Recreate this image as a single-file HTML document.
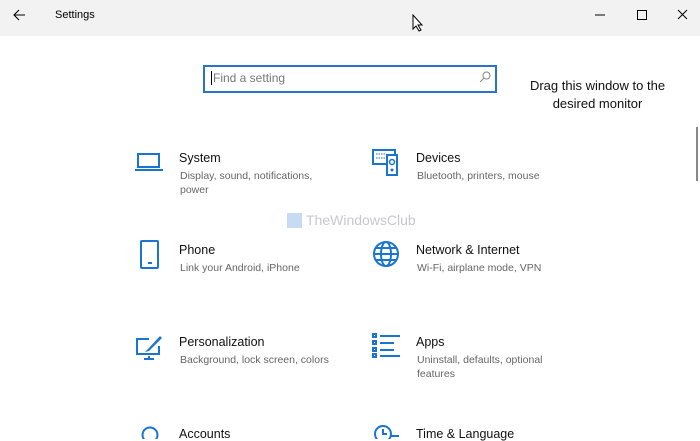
<!DOCTYPE html><html><head><style>
body{margin:0;width:700px;height:439px;overflow:hidden;background:#fff;font-family:"Liberation Sans",sans-serif;position:relative}
.tb{position:absolute;left:0;top:0;width:700px;height:36px;background:#f2f2f2}
.t{position:absolute;font-size:11px;color:#000}
.h{position:absolute;font-size:12.5px;color:#111}
.d{position:absolute;font-size:10.5px;color:#666;line-height:14px}
svg{position:absolute}
</style></head><body>
<div class="tb"></div>
<svg style="left:12px;top:8px" width="14" height="14" viewBox="0 0 14 14"><path d="M13 7H2M7 2L2 7l5 5" stroke="#000" fill="none" stroke-width="1.1"/></svg>
<div class="t" style="left:55px;top:9px">Settings</div>
<svg style="left:412px;top:14px" width="12" height="18" viewBox="0 0 12 18"><path d="M1 1v14l3-3 3 5 2-1-3-5h4z" fill="#fff" stroke="#000" stroke-width="1"/></svg>
<svg style="left:592px;top:8px" width="100" height="14"><path d="M3 7h10" stroke="#000"/><rect x="45.5" y="2.5" width="9" height="9" fill="none" stroke="#000"/><path d="M86 2l9 9M95 2l-9 9" stroke="#000"/></svg>
<div style="position:absolute;left:203px;top:65px;width:290px;height:24px;border:2px solid #2a73c7;background:#fff"></div>
<div style="position:absolute;left:211px;top:71px;width:1px;height:14px;background:#000"></div>
<div class="t" style="left:213px;top:71px;color:#777;font-size:12px">Find a setting</div>
<svg style="left:479px;top:71px" width="12" height="12"><circle cx="7.5" cy="4.5" r="3.5" fill="none" stroke="#888"/><path d="M5 7L1 11" stroke="#888"/></svg>
<div style="position:absolute;left:515px;top:77px;width:165px;text-align:center;font-size:13px;line-height:18px;color:#111">Drag this window to the desired monitor</div>
<div style="position:absolute;left:696px;top:127px;width:2px;height:54px;background:#888"></div>
<svg style="left:135px;top:153px" width="28" height="20"><rect x="3" y="1" width="21" height="13" fill="none" stroke="#1a74d1" stroke-width="2"/><path d="M0 17h28" stroke="#1a74d1" stroke-width="2"/></svg>
<div class="h" style="left:179px;top:151px">System</div>
<div class="d" style="left:180px;top:169px">Display, sound, notifications,<br>power</div>
<svg style="left:372px;top:149px" width="28" height="28"><rect x="1" y="1" width="22" height="14" fill="none" stroke="#1a74d1" stroke-width="2"/><rect x="15" y="6" width="10" height="20" fill="#fff" stroke="#1a74d1" stroke-width="2"/><circle cx="20" cy="13" r="2.5" fill="none" stroke="#1a74d1" stroke-width="1.5"/><circle cx="20" cy="21" r="1.5" fill="#1a74d1"/><path d="M4 5h9M4 9h9" stroke="#1a74d1" stroke-dasharray="1.5 1"/></svg>
<div class="h" style="left:416px;top:151px">Devices</div>
<div class="d" style="left:417px;top:169px">Bluetooth, printers, mouse</div>
<div style="position:absolute;left:287px;top:213px;width:15px;height:15px;background:#c7dcf2"></div>
<div style="position:absolute;left:306px;top:212px;font-size:14px;color:#c8c8cc">TheWindowsClub</div>
<svg style="left:140px;top:240px" width="20" height="29"><rect x="1" y="1" width="17" height="27" rx="1" fill="none" stroke="#1a74d1" stroke-width="2"/><path d="M8 23h4" stroke="#1a74d1" stroke-width="2"/></svg>
<div class="h" style="left:179px;top:243px">Phone</div>
<div class="d" style="left:180px;top:261px">Link your Android, iPhone</div>
<svg style="left:372px;top:240px" width="28" height="28"><g fill="none" stroke="#1a74d1" stroke-width="2"><circle cx="14" cy="14" r="12"/><ellipse cx="14" cy="14" rx="5" ry="12"/><path d="M2 14h24M4 8h20M4 20h20"/></g></svg>
<div class="h" style="left:416px;top:243px">Network &amp; Internet</div>
<div class="d" style="left:417px;top:261px">Wi-Fi, airplane mode, VPN</div>
<svg style="left:135px;top:335px" width="30" height="26"><path d="M14 4H2v15h22v-8" fill="none" stroke="#1a74d1" stroke-width="2"/><path d="M13 22h2M9 24h10" stroke="#1a74d1" stroke-width="2"/><path d="M25 1L13 14l-3 3 4-1 13-13z" fill="#1a74d1"/></svg>
<div class="h" style="left:179px;top:335px">Personalization</div>
<div class="d" style="left:180px;top:353px">Background, lock screen, colors</div>
<svg style="left:372px;top:333px" width="30" height="26"><g fill="none" stroke="#1a74d1" stroke-width="2"><rect x="1" y="1" width="3" height="3"/><rect x="1" y="8" width="3" height="3"/><rect x="1" y="15" width="3" height="3"/><rect x="1" y="21" width="3" height="3"/><path d="M8 3h20M8 10h14M8 17h14M8 23h20"/></g></svg>
<div class="h" style="left:416px;top:335px">Apps</div>
<div class="d" style="left:417px;top:353px">Uninstall, defaults, optional<br>features</div>
<svg style="left:140px;top:425px" width="22" height="14"><circle cx="10" cy="10" r="7.5" fill="none" stroke="#1a74d1" stroke-width="2"/></svg>
<div class="h" style="left:179px;top:427px">Accounts</div>
<svg style="left:372px;top:424px" width="28" height="15"><circle cx="11" cy="10" r="8" fill="none" stroke="#1a74d1" stroke-width="2"/><path d="M11 5v5h4M18 12h9" stroke="#1a74d1" stroke-width="2" fill="none"/></svg>
<div class="h" style="left:416px;top:427px">Time &amp; Language</div>
</body></html>
